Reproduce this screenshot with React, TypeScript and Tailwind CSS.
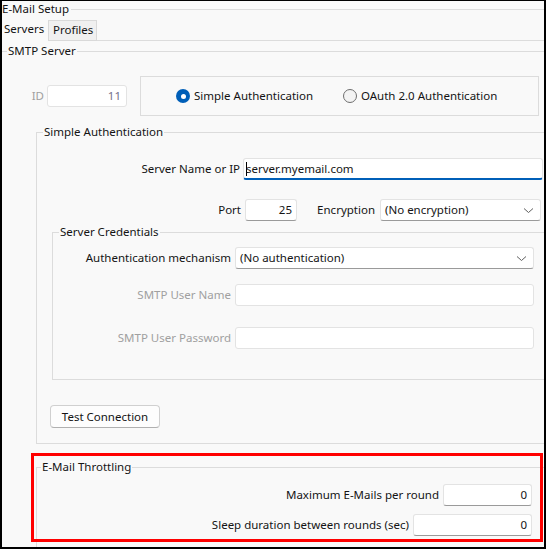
import React from "react";

function Chevron() {
  return (
    <svg width="11" height="7" viewBox="0 0 11 7" className="shrink-0">
      <path d="M1 1.5l4.5 4 4.5-4" fill="none" stroke="#606060" strokeWidth="1" />
    </svg>
  );
}

function TextBox({
  className = "",
  value,
  right,
  disabled,
}: {
  className?: string;
  value?: React.ReactNode;
  right?: boolean;
  disabled?: boolean;
}) {
  return (
    <div
      className={`h-[22px] bg-white border rounded-[3px] flex items-center px-[4px] ${
        disabled ? "border-[#e3e3e3]" : "border-[#e3e3e3] border-b-[#9a9a9a]"
      } ${right ? "justify-end" : ""} ${className}`}
    >
      {value}
    </div>
  );
}

function Combo({ className = "", value }: { className?: string; value: string }) {
  return (
    <div
      className={`h-[22px] bg-white border border-[#e3e3e3] border-b-[#9a9a9a] rounded-[3px] flex items-center justify-between pl-[4px] pr-[6px] ${className}`}
    >
      <span>{value}</span>
      <Chevron />
    </div>
  );
}

function Radio({ checked, label, className = "" }: { checked?: boolean; label: string; className?: string }) {
  return (
    <div className={`flex items-center gap-[4px] ${className}`}>
      {checked ? (
        <span className="w-[14px] h-[14px] rounded-full bg-[#005fb8] flex items-center justify-center">
          <span className="w-[5px] h-[5px] rounded-full bg-white" />
        </span>
      ) : (
        <span className="w-[14px] h-[14px] rounded-full border border-[#6e6e6e] bg-[#f3f3f3]" />
      )}
      <span>{label}</span>
    </div>
  );
}

export default function App() {
  return (
    <div className="relative w-[546px] h-[549px] overflow-hidden bg-[#f9f9f9] border-black border-l-2 border-t border-r-2 border-b-2 text-[11.5px] leading-[16px] text-[#141414] font-['Noto_Sans',sans-serif]">
      <fieldset className="border-t border-[#dcdcdc]">
        <legend className="pr-[2px]">E-Mail Setup</legend>

        {/* Tabs */}
        <div className="flex mt-[2px] h-[22px]">
          <div className="w-[46px] pl-[2px] pt-[2px]">Servers</div>
          <div className="w-[49px] h-[21px] mt-[1px] bg-[#f0f0f0] border border-[#d9d9d9] pl-[4px] pt-[1px]">Profiles</div>
          <div className="flex-1 border-b border-[#dcdcdc]" />
        </div>

        <fieldset className="mt-[2px] border-t border-[#dcdcdc]">
          <legend className="ml-[5px] px-[1px]">SMTP Server</legend>

          {/* ID + auth type */}
          <div className="flex items-center mt-[17px]">
            <div className="w-[45px] pr-[3px] text-right text-[#a0a0a0]">ID</div>
            <TextBox className="w-[80px]" right disabled value={<span className="pr-[1px] text-[#75708a]">11</span>} />
            <div className="ml-[13px] w-[399px] h-[40px] border border-[#dcdcdc] flex items-center pl-[35px]">
              <Radio checked label="Simple Authentication" className="w-[167px]" />
              <Radio label="OAuth 2.0 Authentication" />
            </div>
          </div>

          {/* Simple Authentication */}
          <fieldset className="mt-[8px] ml-[34px] h-[320px] border-l border-t border-b border-[#dcdcdc]">
            <legend className="ml-[6px] px-[1px]">Simple Authentication</legend>

            <div className="flex items-center mt-[18px]">
              <div className="w-[206px] pr-[3px] text-right">Server Name or IP</div>
              <div className="w-[300px] h-[22px] bg-white border border-[#e3e3e3] border-b-2 border-b-[#005fb8] rounded-[3px] flex items-center pl-[2px]">
                <span className="inline-block w-px h-[14px] bg-black -mr-px" />
                <span>server.myemail.com</span>
              </div>
            </div>

            <div className="flex items-center mt-[19px]">
              <div className="w-[208px] pr-[4px] text-right">Port</div>
              <TextBox className="w-[52px]" right value="25" />
              <div className="w-[83px] pr-[5px] text-right">Encryption</div>
              <Combo className="w-[161px]" value="(No encryption)" />
            </div>

            {/* Server Credentials */}
            <fieldset className="mt-[3px] ml-[15px] h-[156px] border-l border-t border-b border-[#dcdcdc]">
              <legend className="ml-[6px] px-[1px]">Server Credentials</legend>

              <div className="flex items-center mt-[7px]">
                <div className="w-[182px] pr-[4px] text-right">Authentication mechanism</div>
                <Combo className="w-[299px]" value="(No authentication)" />
              </div>
              <div className="flex items-center mt-[15px]">
                <div className="w-[182px] pr-[4px] text-right text-[#a0a0a0]">SMTP User Name</div>
                <TextBox className="w-[299px]" disabled />
              </div>
              <div className="flex items-center mt-[21px]">
                <div className="w-[182px] pr-[4px] text-right text-[#a0a0a0]">SMTP User Password</div>
                <TextBox className="w-[299px]" disabled />
              </div>
            </fieldset>

            <button
              type="button"
              className="mt-[25px] ml-[13px] w-[110px] h-[23px] bg-[#fdfdfd] border border-[#d0d0d0] border-b-[#b0b0b0] rounded-[4px] text-[#141414]"
            >
              Test Connection
            </button>
          </fieldset>

          {/* E-Mail Throttling */}
          <fieldset className="mt-[15px] ml-[34px] h-[100px] border-l border-t border-[#dcdcdc]">
            <legend className="ml-[4px] px-[1px]">E-Mail Throttling</legend>
            <div className="flex items-center mt-[9px]">
              <div className="w-[406px] pr-[4px] text-right">Maximum E-Mails per round</div>
              <TextBox className="w-[89px] h-[21px]" right value="0" />
            </div>
            <div className="flex items-center mt-[8px]">
              <div className="w-[376px] pr-[4px] text-right">Sleep duration between rounds (sec)</div>
              <TextBox className="w-[119px] h-[21px]" right value="0" />
            </div>
          </fieldset>
        </fieldset>
      </fieldset>

      {/* annotation */}
      <div className="absolute left-[29px] top-[452px] w-[512px] h-[89px] border-[3px] border-[#ff0000] pointer-events-none" />
    </div>
  );
}
